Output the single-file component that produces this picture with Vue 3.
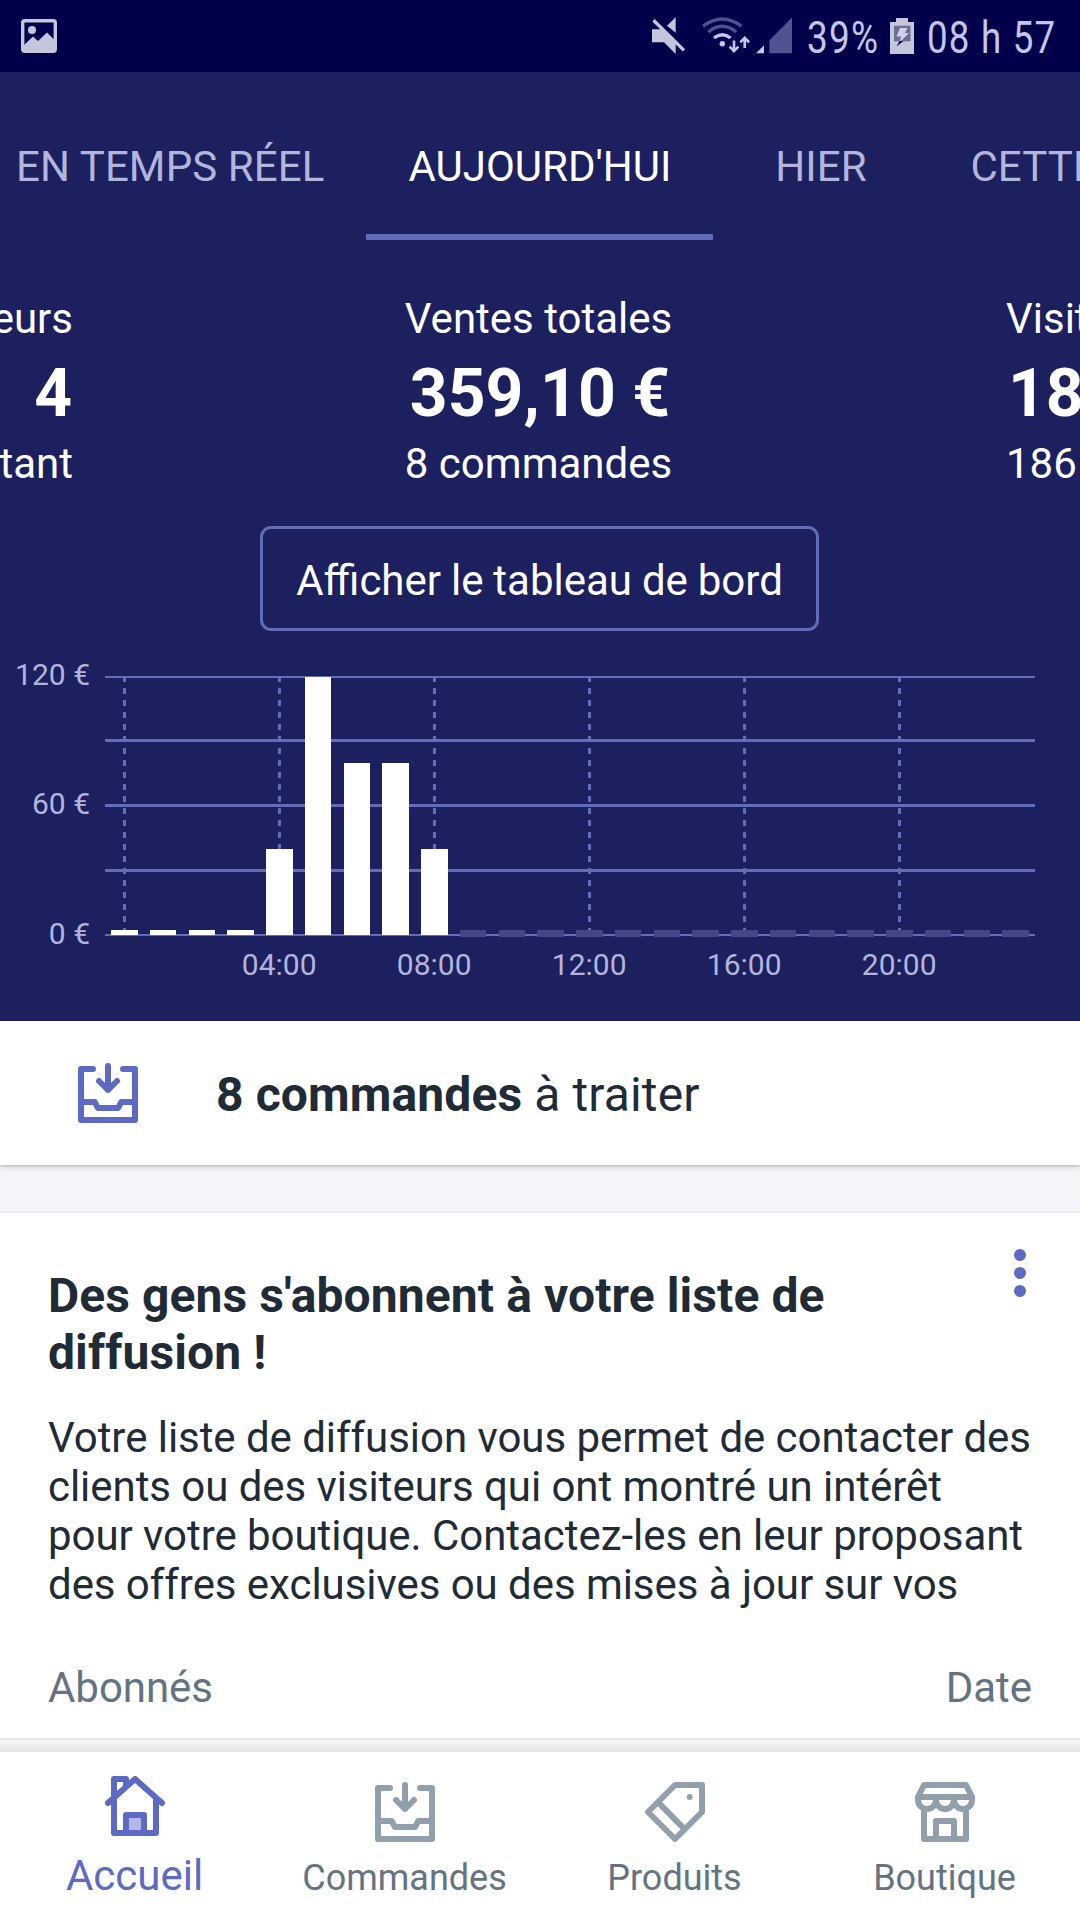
<template>
  <div class="screen">
    <header class="status-bar">
      <svg class="status-icon" width="36" height="34" viewBox="0 0 36 34">
        <rect x="1.7" y="1.7" width="32.6" height="30.6" rx="2" fill="none" stroke="#c5c6dc" stroke-width="3.4" />
        <circle cx="11" cy="11" r="4" fill="#c5c6dc" />
        <path d="M3 26l9-8.5 5 4.5 9-8.5 8 8V32H3z" fill="#c5c6dc" />
      </svg>

      <div class="status-right">
        <svg width="36" height="40" viewBox="650 16 36 40">
          <path d="M652 29.3h10L675.7 43v11L664 42.3h-12z M667 25.7l8.7-8.4v15.4z" fill="#c5c6dc" />
          <path d="M653.5 20.2L684 50.4" stroke="#c5c6dc" stroke-width="3.4" />
        </svg>
        <svg class="wifi" width="50" height="40" viewBox="700 16 50 40" fill="none" stroke-width="3.3">
          <g stroke="#4f5090">
            <path d="M703 26.3q19.3-14.6 38.6 0" />
            <path d="M708.3 32q14-11.6 28 0" />
          </g>
          <path d="M714 38q8.3-6.6 16.6 0" stroke="#c5c6ec" />
          <circle cx="722.3" cy="43.8" r="2.7" fill="#c5c6ec" />
          <g stroke="#c5c6ec" stroke-width="2.6">
            <path d="M734 40.5v10.5M729.6 46.7l4.4 4.5 4.4-4.5" />
            <path d="M744.7 48V38M740.3 42.3l4.4-4.5 4.4 4.5" />
          </g>
        </svg>
        <svg class="signal" width="38" height="40" viewBox="755 16 38 40">
          <path d="M756 53.3l8-8v8z" fill="#c5c6ec" />
          <path d="M769.3 53.3V40.5L792 17.6v35.7z" fill="#515290" />
        </svg>
        <span class="status-text percent"><span>39%</span></span>
        <svg class="battery" width="26" height="40" viewBox="889 16 26 40">
          <path d="M890 22h6v-4h12v4h6v32h-24z" fill="#c5c6dc" />
          <rect x="894" y="25.7" width="16.5" height="15.6" fill="#6c6d94" />
          <path d="M900 28h7.5l-2.5 5h4l-9.5 9.5 1.5-6h-4.5z" fill="#cfd0ea" />
          <path d="M896.5 46.5l3-5.5h4z" fill="#0b0b45" />
        </svg>
        <span class="status-text clock"><span>08 h 57</span></span>
      </div>
    </header>

    <section class="hero">
      <nav class="tabs">
        <div
          v-for="tab in tabs"
          :key="tab"
          class="tab"
          :class="{ active: tab === activeTab }"
        >
          {{ tab }}
        </div>
      </nav>

      <div class="stats">
        <div class="stat stat-prev">
          <div class="stat-label">Visiteurs</div>
          <div class="stat-value">4</div>
          <div class="stat-sub">pour l'instant</div>
        </div>
        <div class="stat stat-current">
          <div class="stat-label">Ventes totales</div>
          <div class="stat-value">359,10 €</div>
          <div class="stat-sub">8 commandes</div>
        </div>
        <div class="stat stat-next">
          <div class="stat-label">Visiteurs</div>
          <div class="stat-value">186</div>
          <div class="stat-sub">186 visites</div>
        </div>
      </div>

      <button class="dashboard-btn">Afficher le tableau de bord</button>

      <svg class="chart" width="1080" height="350" viewBox="0 640 1080 350">
        <rect
          v-for="line in gridLines"
          :key="line.y"
          x="105"
          :y="line.y"
          width="930"
          :height="line.h"
          fill="#636bbb"
        />
        <line
          v-for="h in [0, 4, 8, 12, 16, 20]"
          :key="h"
          :x1="hourX(h)"
          :x2="hourX(h)"
          y1="676"
          y2="935"
          stroke="#636bbb"
          stroke-width="3"
          stroke-dasharray="6 6"
        />
        <rect
          v-for="bar in bars"
          :key="bar.hour"
          :x="bar.x"
          :y="bar.y"
          :width="bar.w"
          :height="bar.height"
          :fill="bar.future ? '#444685' : '#ffffff'"
        />
        <text v-for="l in yLabels" :key="l.text" x="90" :y="l.y" text-anchor="end">{{ l.text }}</text>
        <text
          v-for="h in [4, 8, 12, 16, 20]"
          :key="h"
          :x="hourX(h) - 0.3"
          y="974.5"
          text-anchor="middle"
        >{{ String(h).padStart(2, '0') }}:00</text>
      </svg>
    </section>

    <section class="orders">
      <svg class="orders-icon" width="60" height="60" viewBox="0 0 20 20">
        <path :d="icons.orders" />
      </svg>
      <p><b>8 commandes</b> à traiter</p>
    </section>

    <section class="card">
      <div class="card-head">
        <h2>Des gens s'abonnent à votre liste de diffusion !</h2>
        <div class="dots"><i></i><i></i><i></i></div>
      </div>
      <p class="card-text">
        Votre liste de diffusion vous permet de contacter des clients ou des visiteurs qui ont montré un intérêt pour votre boutique. Contactez-les en leur proposant des offres exclusives ou des mises à jour sur vos
      </p>
      <div class="card-row">
        <span>Abonnés</span>
        <span>Date</span>
      </div>
    </section>

    <nav class="bottom-nav">
      <div
        v-for="item in navItems"
        :key="item.label"
        class="nav-item"
        :class="{ active: item.active }"
      >
        <svg width="60" height="60" viewBox="0 0 20 20">
          <rect v-if="item.icon === 'home'" class="door" x="7" y="13" width="6" height="6" />
          <path :d="icons[item.icon]" />
          <circle v-if="item.icon === 'products'" class="hole" cx="14.9" cy="5" r="1" />
        </svg>
        <span>{{ item.label }}</span>
      </div>
    </nav>
  </div>
</template>

<script setup>
const tabs = ['EN TEMPS RÉEL', "AUJOURD'HUI", 'HIER', 'CETTE SEMAINE']
const activeTab = "AUJOURD'HUI"

// all icons are drawn on a 20x20 grid with 2 unit strokes
const icons = {
  home: 'M1 9l9-8 9 8M3 8V1h4v2.5M3 8v11h14V8M7 19v-6h6v6',
  orders: 'M5 2H1v17h18V2h-4M10 1v8M7 6l3 3 3-3M1 13h4.6l1 2h6.8l1-2H19',
  products: 'M10 1h9v9l-9 9-9-9zM4.4 6.8l8.7 8.8',
  store:
    'M3 1h14l2 4H1zM1 5v1a3 3 0 0 0 6 0 3 3 0 0 0 6 0 3 3 0 0 0 6 0V5M3 9v10h14V9M7 19v-6h6v6',
}

const navItems = [
  { label: 'Accueil', icon: 'home', active: true },
  { label: 'Commandes', icon: 'orders' },
  { label: 'Produits', icon: 'products' },
  { label: 'Boutique', icon: 'store' },
]

const gridLines = [
  { y: 676, h: 2 },
  { y: 739, h: 3 },
  { y: 804, h: 3 },
  { y: 869, h: 3 },
  { y: 934, h: 2 },
]
const yLabels = [
  { text: '120 €', y: 685 },
  { text: '60 €', y: 814 },
  { text: '0 €', y: 943.7 },
]

const sales = [0, 0, 0, 0, 40, 120, 80, 80, 40]
const hourX = (h) => 124.5 + h * 38.75

const bars = Array.from({ length: 24 }, (_, hour) => {
  const future = hour >= sales.length
  const value = sales[hour] || 0
  const x = Math.round(hourX(hour) - 13.5)
  const y = value ? 935 - (value / 120) * 258 : 930
  return { hour, x, w: Math.round(hourX(hour) + 13) - x, y, height: (future ? 937 : 935) - y, future }
})
</script>

<style>
body {
  margin: 0;
  background: #ffffff;
}
</style>

<style scoped>
.screen {
  width: 1080px;
  height: 1920px;
  display: flex;
  flex-direction: column;
  overflow: hidden;
  background: #ffffff;
  font-family: Roboto, 'Noto Sans', sans-serif;
  font-size: 42px;
  line-height: 49px;
  color: #212b36;
}

svg {
  display: block;
  flex-shrink: 0;
}

.status-bar {
  height: 72px;
  flex-shrink: 0;
  display: flex;
  justify-content: space-between;
  box-sizing: border-box;
  padding: 16px 24px 0 21px;
  background: #00004b;
  color: #c5c6ec;
}
.status-icon {
  margin-top: 3px;
}
.status-right {
  display: flex;
}
.wifi {
  margin-left: 14px;
}
.signal {
  margin-left: 5px;
}
.battery {
  margin-left: 10px;
}
.status-text {
  font-size: 45px;
  line-height: 44px;
  letter-spacing: 1.5px;
  white-space: nowrap;
}
.status-text span {
  display: inline-block;
  transform-origin: 0 50%;
}
.percent {
  width: 72px;
  margin-left: 14px;
}
.percent span {
  transform: scaleX(0.82);
}
.clock {
  width: 129px;
  margin-left: 12px;
}
.clock span {
  transform: scaleX(0.815);
}

.hero {
  height: 949px;
  flex-shrink: 0;
  background: #1c205e;
  color: #ffffff;
  overflow: hidden;
}

.tabs {
  display: flex;
  height: 168px;
  margin-left: -26px;
}
.tab {
  flex-shrink: 0;
  box-sizing: border-box;
  min-width: 215px;
  padding: 70px 42px 0;
  border-bottom: 6px solid transparent;
  text-align: center;
  white-space: nowrap;
  letter-spacing: 0.1px;
  color: #b3b5dc;
}
.tab.active {
  border-color: #636bbb;
  color: #ffffff;
  letter-spacing: 0;
}

.stats {
  display: flex;
  justify-content: space-between;
  margin: 54px -130px 0;
  white-space: nowrap;
}
.stat {
  display: flex;
  flex-direction: column;
  width: 264px;
}
.stat-prev {
  width: 203px;
  align-items: flex-end;
}
.stat-current {
  margin-right: 2px;
  align-items: center;
}
.stat-next {
  width: 204px;
}
.stat-value {
  margin: 12px 0 7px;
  font-size: 66px;
  font-weight: 700;
  line-height: 77px;
}
.stat-prev .stat-value {
  padding-right: 1px;
}
.stat-current .stat-value {
  padding-left: 3px;
  letter-spacing: 0.1px;
}
.stat-next .stat-value {
  padding-left: 2px;
}

.dashboard-btn {
  display: block;
  width: 559px;
  height: 105px;
  margin: 38px 0 0 260px;
  padding: 3px 0 0;
  border: 3px solid #636bbb;
  border-radius: 11px;
  background: none;
  color: inherit;
  font: inherit;
  word-spacing: -0.5px;
}

.chart {
  margin-top: 9px;
}
.chart text {
  font-size: 30px;
  fill: #b3b5dc;
}

.orders {
  display: flex;
  align-items: center;
  height: 144px;
  flex-shrink: 0;
  box-sizing: border-box;
  padding-left: 78px;
  background: #ffffff;
  position: relative;
  box-shadow: 0 1px 2px rgba(0, 0, 0, 0.16), 0 3px 6px rgba(0, 0, 0, 0.12);
  font-size: 48px;
  line-height: 57px;
  letter-spacing: 0.12px;
}
.orders p {
  margin: 3px 0 0 78px;
}
.orders-icon path {
  stroke: #5c6ac4;
}
.orders-icon path,
.nav-item path {
  fill: none;
  stroke-width: 2;
  stroke-linecap: round;
  stroke-linejoin: round;
}

.card {
  flex: 1;
  min-height: 0;
  border-top: 46px solid #f4f6fa;
  padding: 0 48px;
  box-shadow: inset 0 2px 0 #e9ecf1;
}
.card-head {
  display: flex;
  justify-content: space-between;
  padding-top: 38px;
}
h2 {
  width: 800px;
  margin: 18px 0 0;
  font-size: 48px;
  font-weight: 700;
  line-height: 57px;
  letter-spacing: 0.09px;
}
.dots {
  display: flex;
  flex-direction: column;
  gap: 6px;
  margin-right: 6px;
}
.dots i {
  width: 12px;
  height: 12px;
  border-radius: 50%;
  background: #5c6ac4;
}
.card-text {
  margin: 32px 0 54px;
  letter-spacing: -0.05px;
}
.card-row {
  display: flex;
  justify-content: space-between;
  letter-spacing: -0.05px;
  color: #637381;
}

.bottom-nav {
  display: grid;
  grid-template-columns: repeat(4, 225px);
  justify-content: center;
  column-gap: 45px;
  box-sizing: border-box;
  height: 182px;
  flex-shrink: 0;
  border-top: 2px solid #e9e9e9;
  background: linear-gradient(#f7f7f7, #e4e4e4 12px, #ffffff 12px);
}
.nav-item {
  display: flex;
  flex-direction: column;
  align-items: center;
  padding-top: 42px;
  font-size: 36px;
  line-height: 42px;
  color: #637381;
}
.nav-item span {
  margin-top: 15px;
  padding-right: 1px;
}
.nav-item path {
  stroke: #919eab;
}
.nav-item .hole {
  fill: #919eab;
}
.nav-item.active {
  padding-top: 36px;
  font-size: 42px;
  line-height: 49px;
  color: #5c6ac4;
}
.nav-item.active path {
  stroke: #5c6ac4;
}
.door {
  fill: #b4b6e6;
}
</style>
